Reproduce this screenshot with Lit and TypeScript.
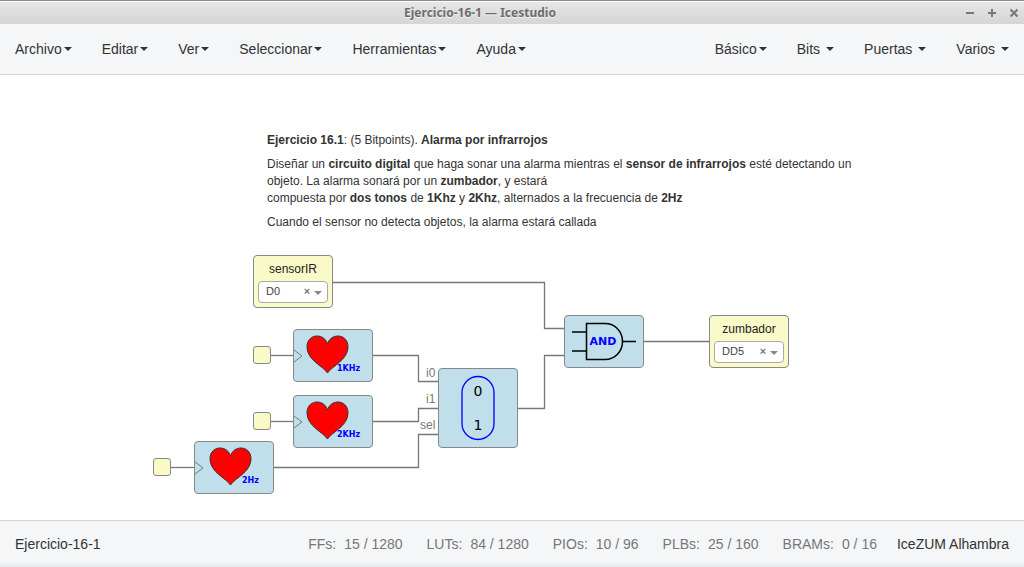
import { LitElement, html, svg, css } from "lit";
import { customElement, property } from "lit/decorators.js";

interface Menu {
  label: string;
  spaced?: boolean;
}

const LEFT_MENUS: Menu[] = [
  { label: "Archivo" },
  { label: "Editar" },
  { label: "Ver" },
  { label: "Seleccionar" },
  { label: "Herramientas" },
  { label: "Ayuda" },
];

const RIGHT_MENUS: Menu[] = [
  { label: "Básico" },
  { label: "Bits", spaced: true },
  { label: "Puertas", spaced: true },
  { label: "Varios", spaced: true },
];

const RESOURCES = [
  ["FFs:", "15 / 1280"],
  ["LUTs:", "84 / 1280"],
  ["PIOs:", "10 / 96"],
  ["PLBs:", "25 / 160"],
  ["BRAMs:", "0 / 16"],
];

// Wires in canvas coordinates
const WIRES = [
  "M333 207.5H544.5V253.5H565",
  "M270 280.5H294",
  "M372 280.5H418.5V306.5H439",
  "M270 346.5H294",
  "M372 346.5H418.5V333.5H439",
  "M171 392.5H195",
  "M273 392.5H418.5V359.5H439",
  "M517 333.5H544.5V280.5H565",
  "M643 266.5H710",
];

@customElement("ice-menu")
export class IceMenu extends LitElement {
  @property({ attribute: false }) items: Menu[] = [];

  static styles = css`
    :host {
      display: block;
    }
    .list {
      display: flex;
      margin: 0;
      padding: 0;
      list-style: none;
    }
    .item {
      display: flex;
      align-items: center;
      gap: 2px;
      padding: 15px;
      border: 0;
      background: none;
      color: #333;
      font: 14px/20px "Liberation Sans", Arial, sans-serif;
      white-space: nowrap;
    }
    .spaced {
      gap: 6px;
    }
    .caret {
      border-top: 4px solid;
      border-left: 4px solid transparent;
      border-right: 4px solid transparent;
    }
  `;

  render() {
    return html`<ul class="list">
      ${this.items.map(
        (m) => html`<li>
          <button class="item ${m.spaced ? "spaced" : ""}" aria-haspopup="true">${m.label}<span class="caret"></span></button>
        </li>`
      )}
    </ul>`;
  }
}

@customElement("io-block")
export class IoBlock extends LitElement {
  @property() name = "";
  @property() pin = "";

  static styles = css`
    :host {
      display: flex;
      flex-direction: column;
      box-sizing: border-box;
      width: 80px;
      height: 53px;
      padding: 5px 4px 4px;
      gap: 3px;
      border: 1px solid #888;
      border-radius: 4px;
      background: #fafac8;
      font-family: "Liberation Sans", Arial, sans-serif;
    }
    .name {
      color: #222;
      font-size: 12px;
      line-height: 17px;
      text-align: center;
    }
    .picker {
      display: grid;
      grid-template-columns: 1fr 10px 12px;
      align-items: center;
      height: 22px;
      box-sizing: border-box;
      padding: 0 3px 2px 0;
      border: 1px solid #aaa;
      border-radius: 4px;
      background: #fff;
    }
    .select {
      grid-area: 1 / 1 / 2 / 4;
      appearance: none;
      width: 100%;
      height: 18px;
      padding: 0 0 0 7px;
      border: 0;
      background: none;
      color: #444;
      font: 11px/18px "Liberation Sans", Arial, sans-serif;
    }
    .clear {
      grid-area: 1 / 2;
      padding: 0;
      border: 0;
      background: none;
      color: #777;
      font: bold 11px/18px "Liberation Sans", Arial, sans-serif;
      z-index: 1;
    }
    .arrow {
      grid-area: 1 / 3;
      justify-self: center;
      margin-top: 4px;
      border-top: 4px solid #888;
      border-left: 4px solid transparent;
      border-right: 4px solid transparent;
      pointer-events: none;
    }
  `;

  render() {
    return html`
      <label class="name" for="pin">${this.name}</label>
      <div class="picker">
        <select class="select" id="pin"><option>${this.pin}</option></select>
        <button class="clear" aria-label="Quitar">×</button>
        <span class="arrow"></span>
      </div>
    `;
  }
}

@customElement("app-root")
export class AppRoot extends LitElement {
  static styles = css`
    :host {
      display: flex;
      flex-direction: column;
      min-height: 100vh;
      background: #fff;
      color: #333;
      font: 14px/20px "Liberation Sans", Arial, sans-serif;
    }
    .titlebar {
      display: grid;
      grid-template-columns: 1fr auto 1fr;
      align-items: center;
      height: 24px;
      box-sizing: border-box;
      border-top: 1px solid #8e8a8e;
      background: linear-gradient(#fff 1px, #e6e6e6 1px, #d5d5d5);
    }
    .title {
      grid-column: 2;
      margin: 0;
      padding-right: 64px;
      color: #6c6c6c;
      font: bold 12px/20px "Noto Sans", sans-serif;
      text-shadow: 0 1px #f4f4f4;
    }
    .window {
      display: flex;
      justify-content: flex-end;
      gap: 10px;
      padding-right: 4px;
    }
    .control {
      display: flex;
      padding: 0;
      border: 0;
      background: none;
      color: #777;
    }
    .navbar {
      display: flex;
      justify-content: space-between;
      border-bottom: 1px solid #d3d6d9;
      background: #f4f6f8;
    }
    .canvas {
      position: relative;
      flex: 1;
      min-height: 430px;
    }
    .wires {
      position: absolute;
      inset: 0;
      width: 100%;
      height: 100%;
      fill: none;
      stroke: #777;
      stroke-width: 1.3;
    }
    .node {
      position: absolute;
    }
    .info {
      width: 590px;
      font-size: 12px;
      line-height: 17px;
    }
    .para {
      margin: 0 0 7px;
    }
    .block {
      box-sizing: border-box;
      width: 80px;
      height: 53px;
      border: 1px solid #888;
      border-radius: 4px;
      background: #c0dfeb;
    }
    .tall {
      height: 80px;
    }
    .art {
      display: block;
      overflow: visible;
    }
    .clock {
      box-sizing: border-box;
      width: 18px;
      height: 18px;
      border: 1px solid #888;
      border-radius: 3px;
      background: #fafac8;
    }
    .ports {
      color: #777;
      font-size: 12px;
      line-height: 26px;
      text-align: right;
    }
    .hz {
      fill: #00f;
      font: bold 8px "DejaVu Sans", sans-serif;
    }
    .gate {
      fill: #00f;
      font: bold 11px "DejaVu Sans", sans-serif;
    }
    .digit {
      fill: #000;
      font: 14px "DejaVu Sans", sans-serif;
    }
    .footer {
      display: flex;
      justify-content: space-between;
      padding: 13px 15px;
      border-top: 1px solid #d3d6d5;
      background: linear-gradient(#f4f6f8 90%, #e6e8e9);
    }
    .resources {
      display: flex;
      gap: 24px;
      margin: 0;
      color: #777;
    }
    .resource {
      display: flex;
      gap: 8px;
    }
    .value {
      margin: 0;
    }
    .status {
      display: flex;
      gap: 20px;
    }
  `;

  private at(x: number, y: number) {
    return `left:${x}px;top:${y}px`;
  }

  private heart(x: number, y: number, label: string) {
    const low = label === "2Hz";
    return html`<div class="node block" style=${this.at(x, y)}>
      <svg class="art" width="78" height="51" role="img" aria-label=${label}>
        <path d="M0 20L8 26L0 32" fill="none" stroke="#777" />
        <path
          transform=${low ? "translate(2 -1)" : "translate(0 -1)"}
          d="M33.500 44C29 37 13 31 13 18C13 10.500 18 7 23 7C28 7 32 10 33.500 15C35 10 39 7 44 7C49 7 54 10.500 54 18C54 31 38 37 33.500 44Z"
          fill="#f00" stroke="#333" />
        <text class="hz" x=${low ? 47 : 43} y="41">${label}</text>
      </svg>
    </div>`;
  }

  render() {
    return html`
      <header>
        <div class="titlebar">
          <h1 class="title">Ejercicio-16-1 — Icestudio</h1>
          <div class="window">
            <button class="control" aria-label="Minimizar">
              <svg width="12" height="12"><path d="M2 6H10" stroke="currentColor" stroke-width="2" /></svg>
            </button>
            <button class="control" aria-label="Maximizar">
              <svg width="12" height="12"><path d="M2 6H10M6 2V10" stroke="currentColor" stroke-width="2" /></svg>
            </button>
            <button class="control" aria-label="Cerrar">
              <svg width="12" height="12"><path d="M2.500 2.500L9.500 9.500M9.500 2.500L2.500 9.500" stroke="currentColor" stroke-width="2" /></svg>
            </button>
          </div>
        </div>
        <nav class="navbar">
          <ice-menu .items=${LEFT_MENUS}></ice-menu>
          <ice-menu .items=${RIGHT_MENUS}></ice-menu>
        </nav>
      </header>

      <main class="canvas">
        <svg class="wires" aria-hidden="true">${WIRES.map((d) => svg`<path d=${d} />`)}</svg>

        <article class="node info" style=${this.at(267, 57)}>
          <p class="para"><b>Ejercicio 16.1</b>: (5 Bitpoints). <b>Alarma por infrarrojos</b></p>
          <p class="para">
            Diseñar un <b>circuito digital</b> que haga sonar una alarma mientras el <b>sensor de infrarrojos</b> esté
            detectando un<br />objeto. La alarma sonará por un <b>zumbador</b>, y estará<br />compuesta por
            <b>dos tonos</b> de <b>1Khz</b> y <b>2Khz</b>, alternados a la frecuencia de <b>2Hz</b>
          </p>
          <p class="para">Cuando el sensor no detecta objetos, la alarma estará callada</p>
        </article>

        <io-block class="node" style=${this.at(253, 180)} name="sensorIR" pin="D0"></io-block>
        <io-block class="node" style=${this.at(709, 240)} name="zumbador" pin="DD5"></io-block>

        <div class="node clock" style=${this.at(253, 271)}></div>
        <div class="node clock" style=${this.at(253, 337)}></div>
        <div class="node clock" style=${this.at(153, 383)}></div>

        ${this.heart(293, 254, "1KHz")} ${this.heart(293, 320, "2KHz")} ${this.heart(194, 366, "2Hz")}

        <div class="node ports" style=${this.at(420, 285)}>
          <div>i0</div>
          <div>i1</div>
          <div>sel</div>
        </div>

        <div class="node block tall" style=${this.at(438, 293)}>
          <svg class="art" width="78" height="78">
            <rect x="23" y="7.500" width="32" height="63" rx="16" fill="none" stroke="#00f" stroke-width="1.300" />
            <text class="digit" x="39" y="27" text-anchor="middle">0</text>
            <text class="digit" x="39" y="61" text-anchor="middle">1</text>
          </svg>
        </div>

        <div class="node block" style=${this.at(564, 240)}>
          <svg class="art" width="78" height="51">
            <path
              d="M7 16H21.500M7 35H21.500M58 25.500H71M21.500 8V43.500H40C50 43.500 57.500 35.500 57.500 25.500C57.500 15.500 50 7.500 40 7.500H21.500Z"
              fill="none" stroke="#000" stroke-width="1.500" />
            <text class="gate" x="38" y="29" text-anchor="middle">AND</text>
          </svg>
        </div>
      </main>

      <footer class="footer">
        <span>Ejercicio-16-1</span>
        <div class="status">
          <dl class="resources">
            ${RESOURCES.map(
              ([name, value]) => html`<div class="resource"><dt>${name}</dt><dd class="value">${value}</dd></div>`
            )}
          </dl>
          <span>IceZUM Alhambra</span>
        </div>
      </footer>
    `;
  }
}
